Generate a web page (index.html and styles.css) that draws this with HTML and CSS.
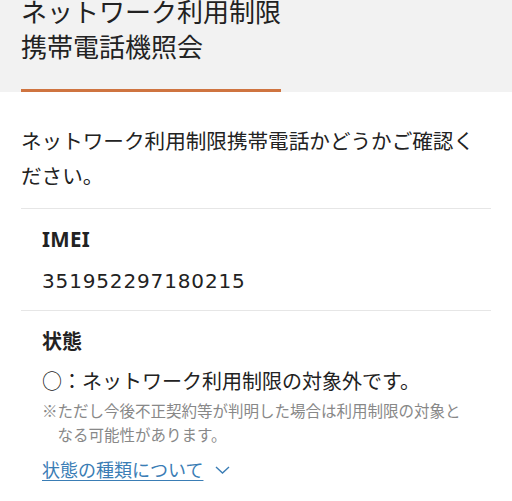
FILE: index.html
```html
<!DOCTYPE html>
<html lang="ja">
<head>
<meta charset="utf-8">
<title>ネットワーク利用制限携帯電話機照会</title>
<link rel="stylesheet" href="styles.css">
</head>
<body>
<header class="page-head">
  <h1 class="title">ネットワーク利用制限<br>携帯電話機照会</h1>
</header>
<main class="content">
  <p class="lead">ネットワーク利用制限携帯電話かどうかご確認ください。</p>
  <section class="item">
    <h2 class="label label-latin">IMEI</h2>
    <p class="value num">351952297180215</p>
  </section>
  <section class="item">
    <h2 class="label">状態</h2>
    <p class="value">○：ネットワーク利用制限の対象外です。</p>
    <p class="note">※ただし今後不正契約等が判明した場合は利用制限の対象となる可能性があります。</p>
    <a class="more" href="#">状態の種類について<svg class="chev" width="15" height="8" viewBox="0 0 15 8"><polyline points="1,1 7.5,7 14,1" fill="none" stroke="currentColor" stroke-width="1.4"/></svg></a>
  </section>
</main>
</body>
</html>
```

FILE: styles.css
```css
html, body {
  margin: 0;
  padding: 0;
  background: #fff;
}
body {
  font-family: "Noto Sans CJK JP", "Noto Sans", sans-serif;
  color: #222;
}
.page-head {
  background: #f2f2f2;
  padding: 0 21px;
  margin-top: -7px;
}
.title {
  display: inline-block;
  margin: 0;
  font-size: 26px;
  font-weight: 400;
  line-height: 35px;
  padding-bottom: 26px;
  border-bottom: 3px solid #cf7440;
  vertical-align: top;
}
.content {
  padding: 0 21px;
}
.lead {
  margin: 31px 0 0;
  font-size: 20.6px;
  line-height: 35px;
  padding-bottom: 15px;
}
.item {
  border-top: 1.5px solid #e6e6e6;
  padding: 15px 21px 14px;
}
.label {
  margin: 0;
  font-size: 20px;
  font-weight: 700;
  line-height: 30px;
}
.label-latin {
  font-family: "Noto Sans", sans-serif;
  font-size: 20.5px;
  letter-spacing: 0.3px;
}
.value {
  margin: 10px 0 0;
  font-size: 20px;
  line-height: 30px;
}
.num {
  margin-top: 12px;
  font-family: "DejaVu Sans", sans-serif;
  letter-spacing: 0.85px;
}
.note {
  margin: 3px 0 0;
  font-size: 15.5px;
  line-height: 23.5px;
  color: #888;
  padding-left: 1em;
  text-indent: -1em;
}
.more {
  display: inline-flex;
  align-items: center;
  gap: 12px;
  margin-top: 10px;
  font-size: 18px;
  line-height: 26px;
  color: #3a7db5;
  text-decoration: underline;
  text-underline-offset: 3px;
  text-decoration-thickness: 1px;
}
.chev {
  display: block;
  margin-top: 2px;
}
```
